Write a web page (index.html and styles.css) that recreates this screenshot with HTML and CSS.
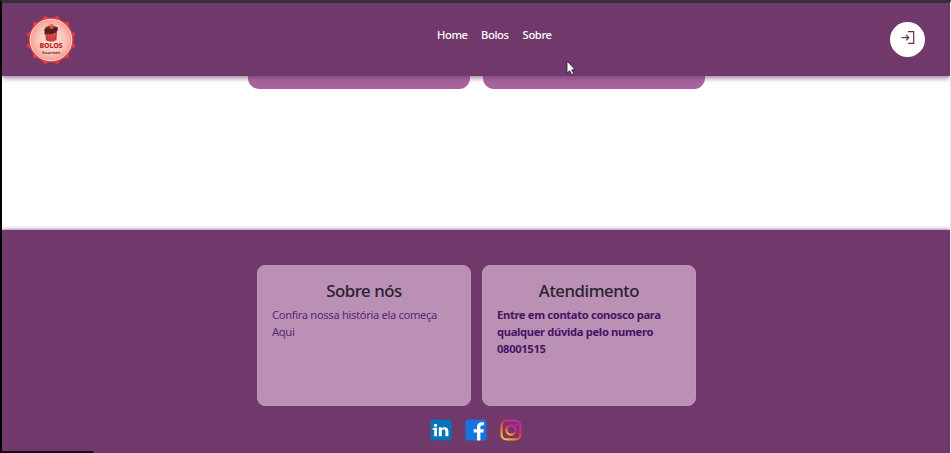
FILE: index.html
```
<!DOCTYPE html>
<html lang="pt-BR">
<head>
<meta charset="utf-8">
<title>Bolos Gourmet</title>
<link rel="stylesheet" href="styles.css">
</head>
<body>
<div class="page">
  <header class="header">
    <a class="logo">
      <svg width="50" height="50" viewBox="0 0 50 50">
        <defs><radialGradient id="seal"><stop offset="0" stop-color="#ffe6dc"/><stop offset=".65" stop-color="#fac5bd"/><stop offset="1" stop-color="#f49d98"/></radialGradient></defs>
        <g fill="#e33a3e">
          <rect x="7" y="7" width="36" height="36" rx="1"/>
          <rect x="7" y="7" width="36" height="36" rx="1" transform="rotate(30 25 25)"/>
          <rect x="7" y="7" width="36" height="36" rx="1" transform="rotate(60 25 25)"/>
          <circle cx="25" cy="25" r="22.500"/>
        </g>
        <circle cx="25" cy="25" r="20.800" fill="url(#seal)" stroke="#ffd5cd" stroke-width="1"/>
        <g transform="translate(4.200 1) scale(.82 1)">
          <path d="M18 14h15l-1 10q-6.500 3-13 0z" fill="#d5463f"/>
          <path d="M21 20v5M24 21v5M28 21v5M31 20v4" stroke="#a42d2b" stroke-width=".7"/>
          <ellipse cx="25.500" cy="13.500" rx="8" ry="4" fill="#72352c"/>
          <path d="M17.500 13v5q1.500 2 2.500-1 1 3 2.500 0 1.500 3 3 0 1.500 3 3-1 1.500 3 3-1 2 1 2-3v-1z" fill="#4e201f"/>
          <circle cx="26" cy="10.500" r="2.600" fill="#ef4a2b"/><circle cx="25.500" cy="9.500" r=".8" fill="#ff9c61"/>
        </g>
        <text x="25" y="33.400" class="logo-name" textLength="23">BOLOS</text>
        <text x="25" y="39" class="logo-sub" textLength="18">Gourmet</text>
      </svg>
    </a>
    <nav class="nav"><a>Home</a><a>Bolos</a><a>Sobre</a></nav>
    <a class="login">
      <svg width="16" height="16" viewBox="0 0 16 16" fill="none" stroke="#633059" stroke-width="1.200"><path d="M8 1.700h5.700v11.600H8M1.500 7.700h7.200M6 5l2.900 2.700L6 10.400"/></svg>
    </a>
  </header>
  <main class="main"><div class="product"></div><div class="product"></div></main>
  <footer class="footer">
    <div class="cards">
      <section class="card"><h2>Sobre nós</h2><p class="about">Confira nossa história ela começa<br>Aqui</p></section>
      <section class="card"><h2>Atendimento</h2><p class="contact">Entre em contato conosco para<br>qualquer dúvida pelo numero<br>08001515</p></section>
    </div>
    <div class="social">
      <svg width="22" height="22" viewBox="0 0 22 22"><rect x=".5" y=".5" width="21" height="21" rx="2" fill="#0874b6"/><path d="M4.200 8.800h2.800v8.500H4.200zM8.800 8.300h2.800v1.300c2-2.500 6.800-1.800 6.800 2.400v5.300h-3v-4.800c0-3-3.600-2.800-3.600 0v4.800h-3z" fill="#fff"/><circle cx="5.500" cy="6.300" r="1.600" fill="#fff"/><path d="M2.500 10h4" stroke="#fff" stroke-width="1.500"/></svg>
      <svg width="22" height="22" viewBox="0 0 22 22"><rect x=".5" y=".5" width="21" height="21" rx="2.500" fill="#1674df"/><path d="M12 21.500v-8H8.700v-3.200H12V8.100c0-3.300 2-4.900 4.900-4.900h2v3h-1.500c-1.500 0-2 .7-2 2v2.100h3.400l-.5 3.200h-2.900v8z" fill="#fff"/></svg>
      <svg width="22" height="22" viewBox="0 0 22 22"><defs><linearGradient id="insta" x1=".15" y1="1" x2=".85" y2="0"><stop offset="0" stop-color="#ffc13b"/><stop offset=".35" stop-color="#f4642d"/><stop offset=".62" stop-color="#e52464"/><stop offset="1" stop-color="#b32bbb"/></linearGradient></defs><g fill="none" stroke="url(#insta)" stroke-width="2.200"><rect x="1.600" y="1.600" width="18.800" height="18.800" rx="5"/><circle cx="11" cy="11" r="4.600"/></g><circle cx="16.500" cy="5.500" r="1.300" fill="#dd287f"/></svg>
    </div>
  </footer>
  <div class="status"></div>
  <svg class="pointer" width="10" height="16" viewBox="0 0 10 16"><path d="M1 1v12.200l2.700-2.500 1.900 4 2-.9-1.800-4h3.400z" fill="#fff" stroke="#261923" stroke-width=".8"/></svg>
</div>
</body>
</html>
```
FILE: styles.css
```
* { box-sizing: border-box; }
body { margin: 0; font-family: "Noto Sans", "Open Sans", sans-serif; background: #fff; }
.page { position: relative; height: 453px; overflow: hidden; border-top: 3px solid #343236; border-left: 2px solid #000; border-right: 1px solid #eee8ee; }
.header { position: relative; z-index: 1; height: 73px; display: grid; grid-template-columns: 435px auto 1fr; background: #71386b; box-shadow: 0 2px 5px #71386baa; }
.logo { padding: 12px 0 0 24px; height: 62px; }
.logo svg, .login svg, .social svg { display: block; }
.logo-name { font: 800 7px/1 "Noto Sans", sans-serif; fill: #b92325; text-anchor: middle; }
.logo-sub { font: bold 4px/1 "Noto Sans", sans-serif; fill: #693331; text-anchor: middle; }
.nav { display: flex; gap: 14px; padding-top: 23px; font-size: 11.200px; line-height: 17px; font-weight: 500; color: #fff; letter-spacing: -.37px; }
.nav a { min-width: 27px; white-space: nowrap; }
.nav a:first-child { width: 30px; letter-spacing: -.4px; }
.login { justify-self: end; margin: 19px 25px 0 0; width: 35px; height: 35px; padding: 8px 0 0 10px; border-radius: 50%; background: #fff; }
.main { height: 154px; display: flex; justify-content: center; gap: 13px; padding-left: 1px; }
.product { width: 222px; height: 13px; background: #a7639f; border-radius: 0 0 11px 11px; }
.footer { position: relative; height: 223px; padding-top: 35px; background: #71386b; box-shadow: 0 -1px 3px #71386b99; }
.cards { display: flex; justify-content: center; gap: 11px; padding-left: 1px; }
.card { width: 214px; height: 141px; padding: 13px 14px; border-radius: 8px; background: #ba90b5; border: 1px solid #c194b9; }
.card h2 { margin: 0 0 4px; font-size: 16.800px; font-weight: 500; line-height: 23px; text-align: center; color: #292330; white-space: nowrap; letter-spacing: -.45px; }
.card p { margin: 0; font-size: 11.200px; line-height: 17px; white-space: nowrap; color: #572974; }
.card .about { letter-spacing: -.34px; }
.card .contact { font-weight: 700; color: #451464; letter-spacing: -.33px; }
.social { display: flex; justify-content: center; gap: 13px; padding-top: 13px; }
.status { position: absolute; left: 0; bottom: 0; width: 92px; height: 2px; background: #160c17; border-top-right-radius: 2px; }
.pointer { position: absolute; left: 564px; top: 57px; z-index: 2; }
```
